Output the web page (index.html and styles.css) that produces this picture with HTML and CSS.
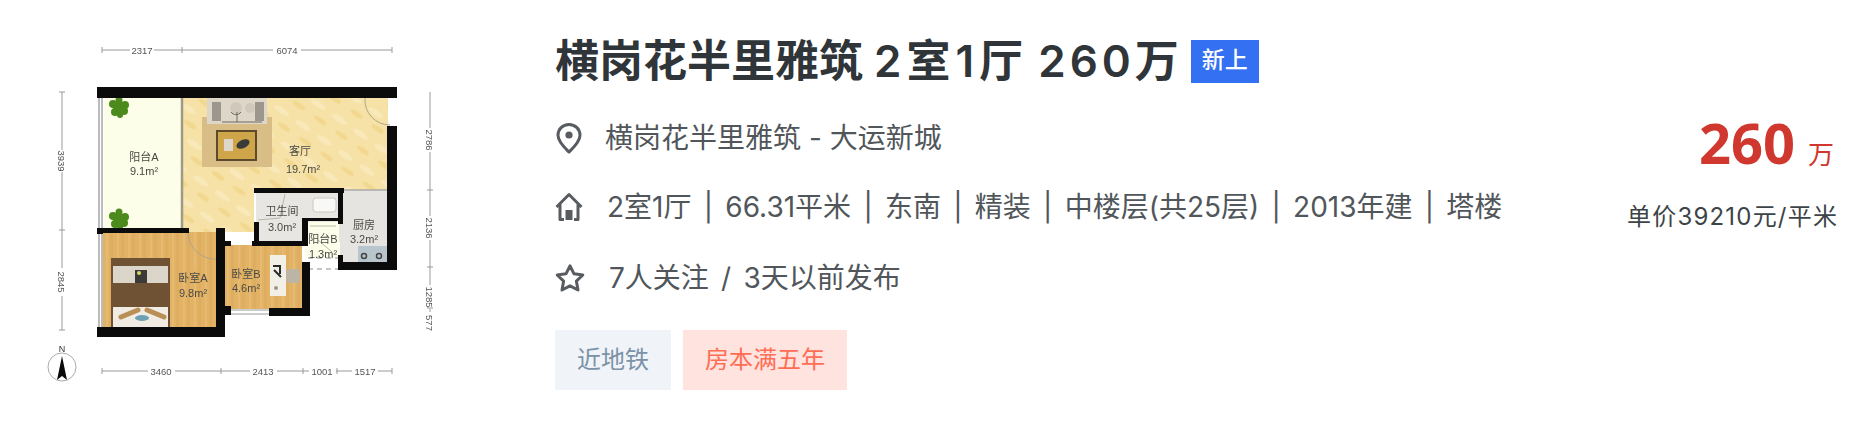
FILE: index.html
```html
<!DOCTYPE html>
<html lang="zh">
<head>
<meta charset="utf-8">
<title>横岗花半里雅筑</title>
<link rel="stylesheet" href="styles.css">
</head>
<body>
<main class="card">
  <svg class="plan" viewBox="0 0 440 428" width="440" height="428" role="img" aria-label="户型图">
    <defs>
      <pattern id="wood" width="11" height="30" patternUnits="userSpaceOnUse">
        <rect class="f-wood" width="11" height="30"/>
        <rect class="f-wood2" x="0" width="3" height="30"/>
        <rect class="f-wood3" x="7" width="2" height="30"/>
      </pattern>
      <pattern id="marble" width="26" height="26" patternUnits="userSpaceOnUse" patternTransform="rotate(35)">
        <rect class="f-floor" width="26" height="26"/>
        <ellipse class="f-floor2" cx="8" cy="7" rx="9" ry="3"/>
        <ellipse class="f-floor3" cx="20" cy="19" rx="8" ry="2.5"/>
      </pattern>
    </defs>

    <!-- dimension lines -->
    <g class="dim">
      <path d="M102 50H130M154 50H273M301 50H392"/>
      <path d="M102 47V53M182 47V53M392 47V53"/>
      <path d="M62 92V150M62 172V268M62 296V330"/>
      <path d="M59 92H65M59 230H65M59 330H65"/>
      <path d="M430 92V128M430 152V216M430 240V285M430 309V312"/>
      <path d="M427 190H433M427 267H433M427 308H433"/>
      <path d="M102 371H148M175 371H250M277 371H309M336 371H352M378 371H392"/>
      <path d="M102 368V374M221 368V374M303 368V374M337 368V374M392 368V374"/>
    </g>
    <g class="dim-text">
      <text x="142" y="54">2317</text>
      <text x="287" y="54">6074</text>
      <text x="161" y="375">3460</text>
      <text x="263" y="375">2413</text>
      <text x="322" y="375">1001</text>
      <text x="365" y="375">1517</text>
      <text transform="translate(58 161) rotate(90)">3939</text>
      <text transform="translate(58 282) rotate(90)">2845</text>
      <text transform="translate(426 140) rotate(90)">2786</text>
      <text transform="translate(426 228) rotate(90)">2136</text>
      <text transform="translate(426 297) rotate(90)">1285</text>
      <text transform="translate(426 323) rotate(90)">577</text>
    </g>

    <!-- floors -->
    <path fill="url(#marble)" d="M182 97H388V190H254V232H182Z"/>
    <rect class="f-balcony" x="104" y="97" width="78" height="133"/>
    <rect class="f-kitchen" x="340" y="190" width="47" height="72"/>
    <rect class="f-bath" x="256" y="192" width="84" height="50"/>
    <rect class="f-balcony" x="305" y="222" width="34" height="36"/>
    <rect fill="url(#wood)" x="103" y="232" width="114" height="95"/>
    <rect fill="url(#wood)" x="224" y="245" width="78" height="64"/>

    <!-- living room furniture -->
    <rect class="f-rug" x="202" y="117" width="70" height="50"/>
    <rect class="f-sofa" x="207" y="97" width="60" height="27"/>
    <rect class="f-sofa2" x="212" y="102" width="9" height="19"/>
    <rect class="f-sofa2" x="255" y="102" width="9" height="19"/>
    <circle class="f-cushion2" cx="236" cy="108" r="6"/>
    <circle class="f-cushion2" cx="250" cy="108" r="5"/>
    <path class="s-sofa" d="M231 112A6 6 0 0 0 241 112M222 122H262M237 112V122"/>
    <rect class="f-table-edge" x="216" y="130" width="41" height="31"/>
    <rect class="f-table" x="218" y="132" width="37" height="27"/>
    <rect class="f-sofa" x="224" y="139" width="9" height="12"/>
    <ellipse class="f-dark" cx="243" cy="144" rx="7" ry="4" transform="rotate(-25 243 144)"/>

    <!-- plants -->
    <g class="f-plant">
      <circle cx="119" cy="107" r="6"/><circle cx="113" cy="104" r="4"/><circle cx="125" cy="105" r="4"/><circle cx="115" cy="112" r="4"/><circle cx="124" cy="111" r="4"/><circle cx="119" cy="100" r="3.5"/><circle cx="120" cy="115" r="3"/>
      <circle cx="119" cy="219" r="6"/><circle cx="113" cy="216" r="4"/><circle cx="125" cy="217" r="4"/><circle cx="115" cy="224" r="4"/><circle cx="124" cy="223" r="4"/><circle cx="119" cy="212" r="3.5"/><circle cx="120" cy="227" r="3"/>
    </g>

    <!-- bed -->
    <rect class="f-bedhead" x="111" y="258" width="59" height="69"/>
    <rect class="f-bedsheet" x="113" y="266" width="55" height="17"/>
    <rect class="f-dark" x="135" y="270" width="12" height="13"/>
    <circle class="f-lamp" cx="139" cy="273" r="2"/>
    <rect class="f-bedsheet2" x="113" y="307" width="55" height="20"/>
    <path class="s-pillow" d="M121 317L138 310M164 317L147 310"/>
    <ellipse class="f-cushion" cx="142" cy="318" rx="7" ry="3"/>

    <!-- bedroom B desk -->
    <rect class="f-desk" x="270" y="255" width="16" height="41"/>
    <rect class="f-chair" x="286" y="269" width="14" height="14" rx="3"/>
    <path class="s-desk" d="M273 266H280V274M274 270L281 277"/>
    <circle class="f-sofa2" cx="276" cy="288" r="2"/>

    <!-- bath and kitchen fixtures -->
    <rect class="f-white" x="313" y="198" width="23" height="14" rx="3"/>
    <path class="s-thin" d="M258 220L280 218L285 194"/>
    <rect class="f-stove" x="358" y="246" width="29" height="16"/>
    <circle class="s-burner" cx="364" cy="256" r="2.5"/>
    <circle class="s-burner" cx="379" cy="256" r="2.5"/>
    <path class="s-thin" d="M310 226H336M318 240L332 252"/>
    <path class="s-dash" d="M308 258H338M308 269H338"/>

    <!-- thin walls and windows -->
    <path class="s-window" d="M99 97V327M102 97V327"/>
    <path class="s-thin-wall" d="M182 97V230"/>
    <path class="s-thin-wall2" d="M343 190H387"/>
    <path class="s-window2" d="M225 310H269M225 314H269"/>
    <path class="s-door" d="M365 98A25 25 0 0 0 390 125"/>
    <path class="s-door" d="M188 232A27 27 0 0 0 216 259"/>

    <!-- walls -->
    <g class="f-wall">
      <rect x="97" y="87" width="300" height="11"/>
      <rect x="387" y="87" width="10" height="11"/>
      <rect x="387" y="126" width="10" height="144"/>
      <rect x="340" y="262" width="57" height="8"/>
      <rect x="254" y="188" width="90" height="5"/>
      <rect x="254" y="222" width="5" height="23"/>
      <rect x="338" y="188" width="5" height="36"/>
      <rect x="338" y="255" width="5" height="15"/>
      <rect x="252" y="241" width="56" height="5"/>
      <rect x="302" y="218" width="6" height="28"/>
      <rect x="302" y="218" width="36" height="3"/>
      <rect x="302" y="262" width="8" height="54"/>
      <rect x="269" y="308" width="41" height="8"/>
      <rect x="97" y="228" width="92" height="5"/>
      <rect x="97" y="228" width="6" height="6"/>
      <rect x="216" y="228" width="9" height="109"/>
      <rect x="225" y="241" width="6" height="5"/>
      <rect x="225" y="306" width="6" height="9"/>
      <rect x="97" y="327" width="128" height="10"/>
    </g>

    <!-- room labels -->
    <g class="room">
      <text x="144" y="161">阳台A</text>
      <text x="144" y="175">9.1m²</text>
      <text x="300" y="155">客厅</text>
      <text x="303" y="173">19.7m²</text>
      <text x="282" y="215">卫生间</text>
      <text x="282" y="231">3.0m²</text>
      <text x="323" y="243">阳台B</text>
      <text x="323" y="258">1.3m²</text>
      <text x="364" y="229">厨房</text>
      <text x="364" y="243">3.2m²</text>
      <text x="193" y="282">卧室A</text>
      <text x="193" y="297">9.8m²</text>
      <text x="246" y="278">卧室B</text>
      <text x="246" y="292">4.6m²</text>
    </g>

    <!-- compass -->
    <circle class="s-compass" cx="62" cy="367" r="14"/>
    <path class="f-wall" d="M62 356L67 380L62 376L57 380Z"/>
    <text class="compass-n" x="62" y="352">N</text>
  </svg>

  <section class="info">
    <h1 class="title"><span>横岗花半里雅筑 <span class="sp-room">2室1厅</span> <span class="sp-price">260</span>万</span><em class="badge">新上</em></h1>
    <p class="row row-loc">
      <svg class="icon" viewBox="0 0 28 32" width="28" height="32"><path class="s-icon" d="M14 2.5C7.6 2.5 3 7.3 3 13.2C3 19.6 9.5 25.6 14 30C18.5 25.6 25 19.6 25 13.2C25 7.3 20.4 2.5 14 2.5Z"/><circle class="f-icon" cx="14" cy="13" r="3.6"/></svg>
      <span class="t-loc">横岗花半里雅筑 - 大运新城</span>
    </p>
    <p class="row row-attr">
      <svg class="icon" viewBox="0 0 28 30" width="28" height="30"><path class="s-icon" d="M1.5 15L14 2.5L26.5 15M5 12.5V27.5H9M23 12.5V27.5H19"/><rect class="f-icon" x="10.5" y="18" width="7" height="10"/></svg>
      <span class="t-attr">2室1厅 | 66.31平米 | 东南 | 精装 | 中楼层(共25层) | 2013年建 | 塔楼</span>
    </p>
    <p class="row row-follow">
      <svg class="icon" viewBox="0 0 30 30" width="30" height="30"><path class="s-icon" d="M15 2.8L19 10.8L27.8 12L21.4 18.2L23 27L15 22.8L7 27L8.6 18.2L2.2 12L11 10.8Z"/></svg>
      <span class="t-follow">7人关注 / 3天以前发布</span>
    </p>
    <div class="tags">
      <span class="tag tag-subway">近地铁</span>
      <span class="tag tag-five">房本满五年</span>
    </div>
  </section>

  <aside class="price">
    <div class="total"><b>260</b><span>万</span></div>
    <div class="unit">单价39210元/平米</div>
  </aside>
</main>
</body>
</html>
```

FILE: styles.css
```css
* { box-sizing: border-box; }
html, body { margin: 0; padding: 0; background: #fff; }
body { font-family: "Inter", "Noto Sans CJK SC", sans-serif; }

.card {
  display: flex;
  width: 1864px;
  height: 428px;
  overflow: hidden;
}

.plan { flex: none; display: block; filter: blur(0.45px); }
.plan text { font-family: "Liberation Sans", "Noto Sans CJK SC", sans-serif; }

.dim path { fill: none; stroke: #9a9a9a; stroke-width: 1; }
.dim-text text { font-size: 9.5px; fill: #555; text-anchor: middle; }
.room text { font-size: 11px; fill: #4a4a45; text-anchor: middle; }
.compass-n { font-size: 9px; fill: #333; text-anchor: middle; }

.f-wood { fill: #e2b265; }
.f-wood2 { fill: #dfad5f; }
.f-wood3 { fill: #e6ba72; }
.f-floor { fill: #f6e2a6; }
.f-floor2 { fill: #f9e9ba; }
.f-floor3 { fill: #f2d88f; }
.f-balcony { fill: #fdfee9; }
.f-kitchen { fill: #e6e4e0; }
.f-bath { fill: #e8e6e2; }
.f-rug { fill: #d9bd87; }
.f-sofa { fill: #ded6c8; }
.f-sofa2 { fill: #9d968c; }
.f-cushion2 { fill: #cfc8bb; }
.f-dark { fill: #3c3a36; }
.f-table-edge { fill: #5d4a2c; }
.f-table { fill: #cfa54a; }
.f-plant { fill: #4c8a1e; }
.f-bedhead { fill: #6e5233; }
.f-bedsheet { fill: #dcd6ca; }
.f-bedsheet2 { fill: #f0ece4; }
.f-lamp { fill: #d8d860; }
.f-cushion { fill: #6ea0b4; }
.f-desk { fill: #f2efe6; }
.f-chair { fill: #bcb4a4; }
.f-white { fill: #f8f8f6; stroke: #c8c8c4; }
.f-stove { fill: #b9c5cd; }
.f-wall { fill: #0b0b0b; }
.s-pillow { fill: none; stroke: #b98f56; stroke-width: 5; stroke-linecap: round; }
.s-burner { fill: none; stroke: #444; stroke-width: 1.5; }
.s-thin { fill: none; stroke: #b8b8a8; stroke-width: 1; }
.s-dash { fill: none; stroke: #c8c8c2; stroke-width: 2; stroke-dasharray: 5 4; }
.s-sofa { fill: none; stroke: #6f6a60; stroke-width: 1; }
.s-desk { fill: none; stroke: #2c2c2c; stroke-width: 2; }
.s-window { fill: none; stroke: #8f8f8f; stroke-width: 1.2; }
.s-window2 { fill: none; stroke: #999; stroke-width: 1; }
.s-thin-wall { fill: none; stroke: #9d9a86; stroke-width: 2.5; }
.s-thin-wall2 { fill: none; stroke: #aaa; stroke-width: 1.5; }
.s-door { fill: none; stroke: #b0a68c; stroke-width: 1; }
.s-compass { fill: #fff; stroke: #aaa; stroke-width: 1; }

.info {
  flex: none;
  width: 1072px;
  margin-left: 115px;
  padding-top: 40px;
  display: flex;
  flex-direction: column;
}

.title {
  display: flex;
  align-items: center;
  height: 43px;
  margin: 0;
  font-size: 44px;
  font-weight: 600;
  line-height: 43px;
  color: #2f3538;
  white-space: pre;
}

.sp-room { letter-spacing: 5px; margin-right: -1px; }
.sp-price { letter-spacing: 4px; }

.badge {
  flex: none;
  width: 68px;
  height: 43px;
  margin-left: 12px;
  background: #3370f2;
  color: #fff;
  font-size: 23px;
  font-style: normal;
  font-weight: 500;
  line-height: 40px;
  text-align: center;
}

.row {
  display: flex;
  align-items: center;
  height: 40px;
  margin: 0;
  font-size: 28px;
  font-weight: 400;
  color: #50565a;
  white-space: pre;
}

.row-loc { margin-top: 35px; }
.row-attr { margin-top: 29px; }
.row-follow { margin-top: 31px; }

.icon { flex: none; display: block; }
.s-icon { fill: none; stroke: #585c60; stroke-width: 3; stroke-linejoin: round; }
.f-icon { fill: #585c60; }

.t-loc { margin: 0 0 4px 22px; }
.t-attr { margin: 0 0 5px 24px; word-spacing: 4.4px; }
.t-follow { margin: 0 0 4px 24px; word-spacing: 4.4px; }

.tags {
  display: flex;
  gap: 12px;
  margin-top: 32px;
}

.tag {
  height: 60px;
  padding: 0 22px;
  font-size: 24px;
  line-height: 60px;
}

.tag-subway { background: #f0f4f8; color: #7b92a8; }
.tag-five { background: #ffe3de; color: #ff6d55; }

.price {
  flex: none;
  width: 209px;
  padding-top: 112px;
  color: #3d4448;
  text-align: right;
}

.total {
  height: 60px;
  margin-right: 2px;
  color: #d0372e;
  font-size: 26px;
  line-height: 60px;
}

.total b {
  margin-right: 13px;
  font-family: "Open Sans", sans-serif;
  font-size: 56px;
  font-weight: 700;
}

.unit {
  margin-top: 30px;
  margin-right: 2px;
  font-size: 24px;
  letter-spacing: 1.2px;
  line-height: 30px;
  white-space: nowrap;
}
```
